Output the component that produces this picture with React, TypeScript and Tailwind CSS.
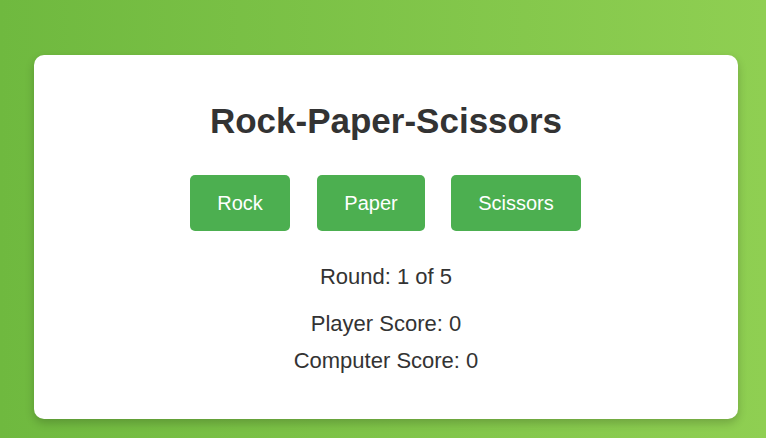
export default function App() {
  return (
    <div
      className="w-[766px] h-[438px] overflow-hidden pt-[55px] bg-[linear-gradient(to_right,#6fb93f,#8fcf52)]"
      style={{ fontFamily: '"Liberation Sans", Arial, sans-serif' }}
    >
      <div className="ml-[34px] w-[704px] h-[364px] bg-white rounded-[10px] shadow-[0_4px_10px_rgba(0,0,0,0.2)] flex flex-col items-center pt-[46px] text-[#333]">
        <h1 className="text-[35px] leading-[40px] font-bold">Rock-Paper-Scissors</h1>
        <div className="flex gap-[26px] mt-[34px] pr-[1px]">
          <button className="w-[100px] h-[56px] mr-[1px] bg-[#4caf50] text-white text-[20px] rounded-[5px]">Rock</button>
          <button className="w-[108px] h-[56px] bg-[#4caf50] text-white text-[20px] rounded-[5px]">Paper</button>
          <button className="w-[130px] h-[56px] bg-[#4caf50] text-white text-[20px] rounded-[5px]">Scissors</button>
        </div>
        <p className="mt-[33px] text-[22px] leading-[26px]">Round: 1 of 5</p>
        <p className="mt-[21px] text-[22px] leading-[26px]">Player Score: 0</p>
        <p className="mt-[11px] text-[22px] leading-[26px]">Computer Score: 0</p>
      </div>
    </div>
  );
}
